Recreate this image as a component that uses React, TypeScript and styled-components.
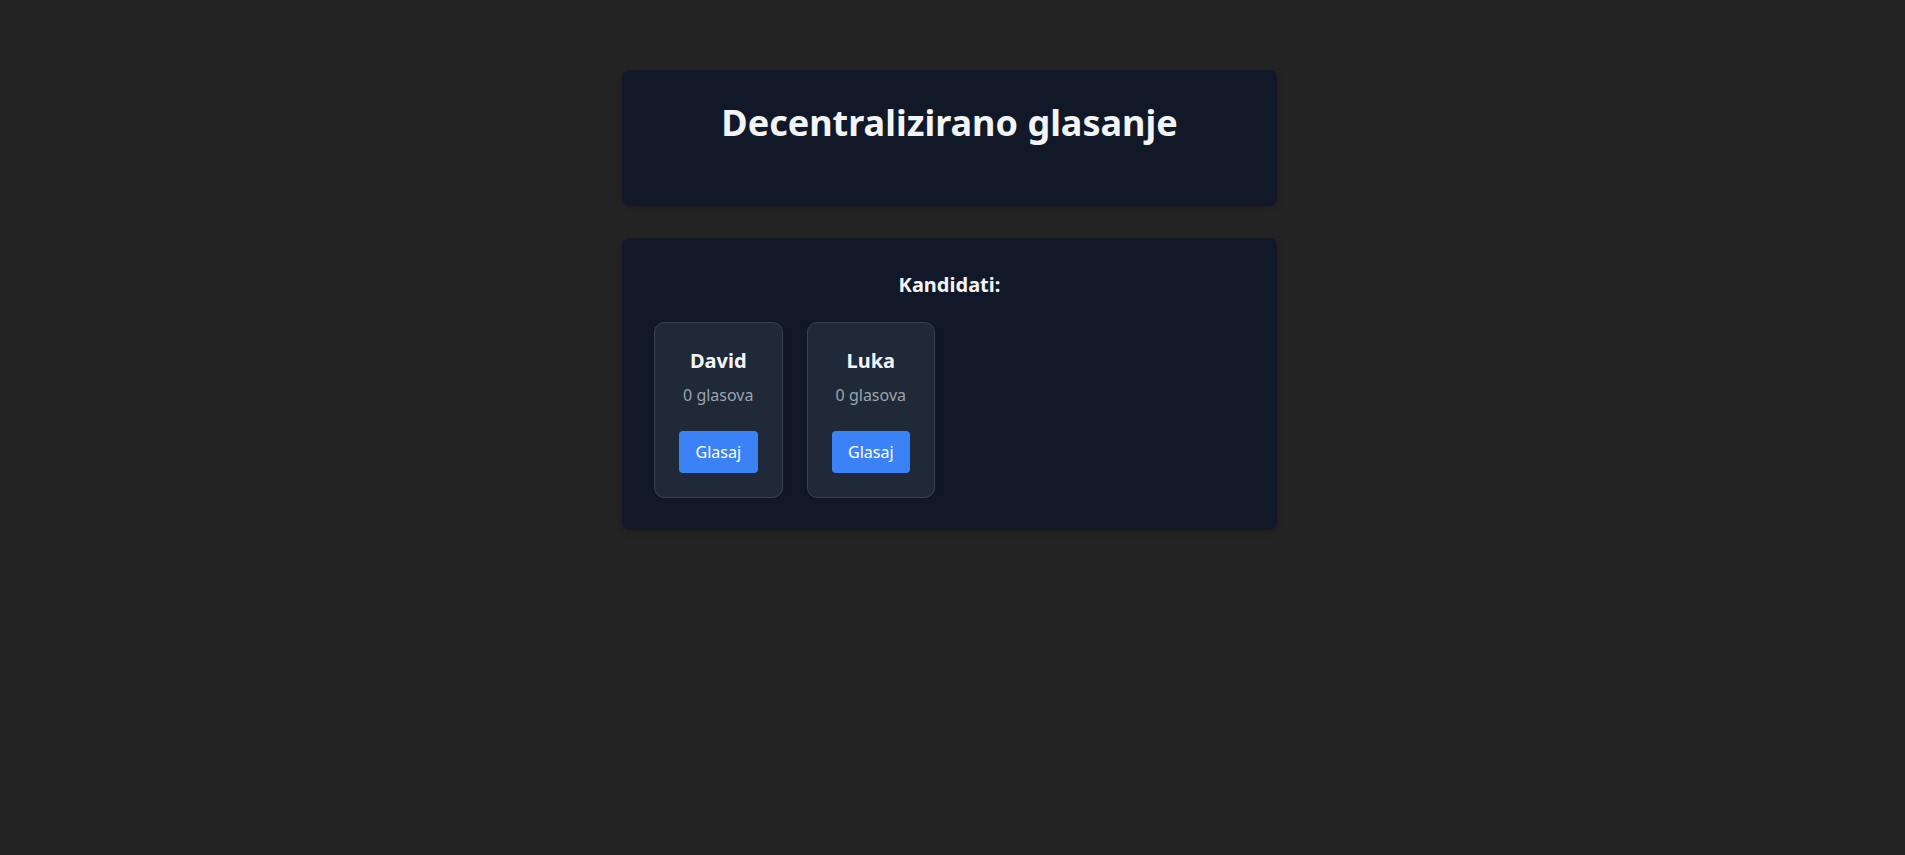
import React from "react";
import styled, { createGlobalStyle } from "styled-components";

const GlobalStyle = createGlobalStyle`
  html, body {
    margin: 0;
    padding: 0;
    background: #242424;
  }
  body {
    font-family: "Noto Sans", "Open Sans", sans-serif;
    color: #f3f4f6;
  }
`;

const Page = styled.main`
  min-height: 100vh;
  box-sizing: border-box;
  padding: 70px 6px 40px 0;
  display: flex;
  flex-direction: column;
  align-items: center;
  gap: 32px;
`;

const Panel = styled.section<{ $pad?: string }>`
  box-sizing: border-box;
  width: 655px;
  background: #111827;
  border-radius: 8px;
  box-shadow: 0 2px 6px rgba(0, 0, 0, 0.25);
  padding: ${(p) => p.$pad ?? "32px"};
`;

const Title = styled.h1`
  margin: 0 0 27px;
  font-size: 36px;
  font-weight: 700;
  text-align: center;
  color: #f3f4f6;
`;

const SectionTitle = styled.h2`
  margin: 0 0 24px;
  font-size: 20px;
  font-weight: 700;
  text-align: center;
  color: #f3f4f6;
`;

const CandidateList = styled.div`
  display: flex;
  flex-wrap: wrap;
  gap: 24px;
`;

const CandidateCard = styled.div`
  background: #1f2937;
  border: 1px solid #374151;
  border-radius: 10px;
  padding: 24px;
  display: flex;
  flex-direction: column;
  align-items: center;
  text-align: center;
  box-shadow: 0 1px 3px rgba(0, 0, 0, 0.2);
`;

const Name = styled.h3`
  margin: 0 0 10px;
  font-size: 20px;
  font-weight: 700;
  color: #f3f4f6;
`;

const Votes = styled.p`
  margin: 0 0 25px;
  font-size: 16px;
  color: #9ca3af;
`;

const VoteButton = styled.button`
  font-family: inherit;
  font-size: 16px;
  padding: 10px 16.5px;
  background: #3b82f6;
  color: #ffffff;
  border: none;
  border-radius: 4px;
  cursor: pointer;
  line-height: normal;
`;

const candidates = [
  { name: "David", votes: 0 },
  { name: "Luka", votes: 0 },
];

export default function App() {
  return (
    <>
      <GlobalStyle />
      <Page>
        <Panel $pad="28px 32px 32px">
          <Title>Decentralizirano glasanje</Title>
        </Panel>
        <Panel $pad="33px 32px 32px">
          <SectionTitle>Kandidati:</SectionTitle>
          <CandidateList>
            {candidates.map((c) => (
              <CandidateCard key={c.name}>
                <Name>{c.name}</Name>
                <Votes>{c.votes} glasova</Votes>
                <VoteButton>Glasaj</VoteButton>
              </CandidateCard>
            ))}
          </CandidateList>
        </Panel>
      </Page>
    </>
  );
}
